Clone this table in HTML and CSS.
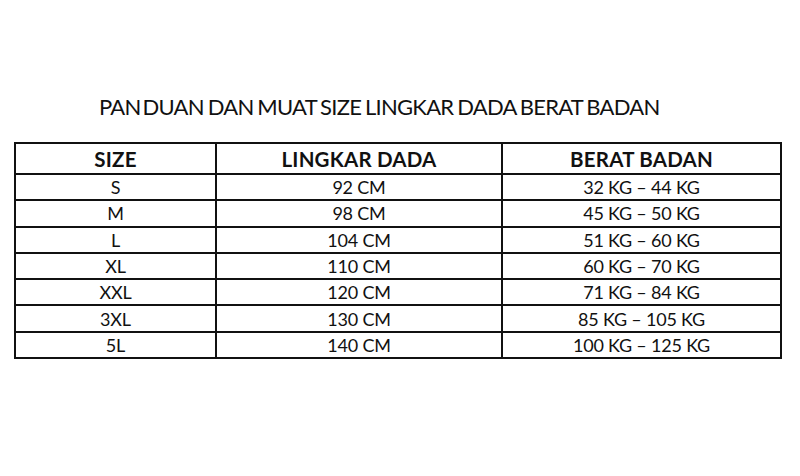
FILE: index.html
```html
<!DOCTYPE html>
<html>
<head>
<meta charset="utf-8">
<link rel="stylesheet" href="styles.css">
</head>
<body>
<div class="page">
  <h1 class="title">PAN<span class="gap">DUAN</span> DAN MUAT SIZE LINGKAR DADA BERAT BADAN</h1>
  <table class="chart">
    <thead>
      <tr><th class="c1">SIZE</th><th class="c2">LINGKAR DADA</th><th class="c3">BERAT BADAN</th></tr>
    </thead>
    <tbody>
      <tr><td>S</td><td>92 CM</td><td>32 KG – 44 KG</td></tr>
      <tr><td>M</td><td>98 CM</td><td>45 KG – 50 KG</td></tr>
      <tr><td>L</td><td>104 CM</td><td>51 KG – 60 KG</td></tr>
      <tr><td>XL</td><td>110 CM</td><td>60 KG – 70 KG</td></tr>
      <tr><td>XXL</td><td>120 CM</td><td>71 KG – 84 KG</td></tr>
      <tr><td>3XL</td><td>130 CM</td><td>85 KG – 105 KG</td></tr>
      <tr><td>5L</td><td>140 CM</td><td>100 KG – 125 KG</td></tr>
    </tbody>
  </table>
</div>
</body>
</html>
```
FILE: styles.css
```css
html, body {
  margin: 0;
  padding: 0;
  background: #ffffff;
}
.page {
  width: 800px;
  height: 476px;
  padding-top: 92px;
  box-sizing: border-box;
  font-family: "Lato", "Open Sans", sans-serif;
  color: #111;
}
.title {
  margin: 0 0 0 99px;
  font-size: 22px;
  font-weight: 400;
  line-height: 30px;
  letter-spacing: -0.75px;
  word-spacing: -1px;
  height: 50px;
}
.gap {
  margin-left: 2px;
}
.chart {
  margin-left: 14px;
  width: 768px;
  border-collapse: collapse;
  table-layout: fixed;
}
.chart th, .chart td {
  border: 2px solid #111;
  text-align: center;
  padding: 0;
}
.chart th {
  height: 29px;
  font-size: 20.5px;
  font-weight: 700;
  letter-spacing: 0.2px;
}
.chart td {
  height: 24.3px;
  font-size: 18px;
  font-weight: 400;
  letter-spacing: -0.2px;
}
.c1 { width: 199px; }
.c2 { width: 284px; }
```
